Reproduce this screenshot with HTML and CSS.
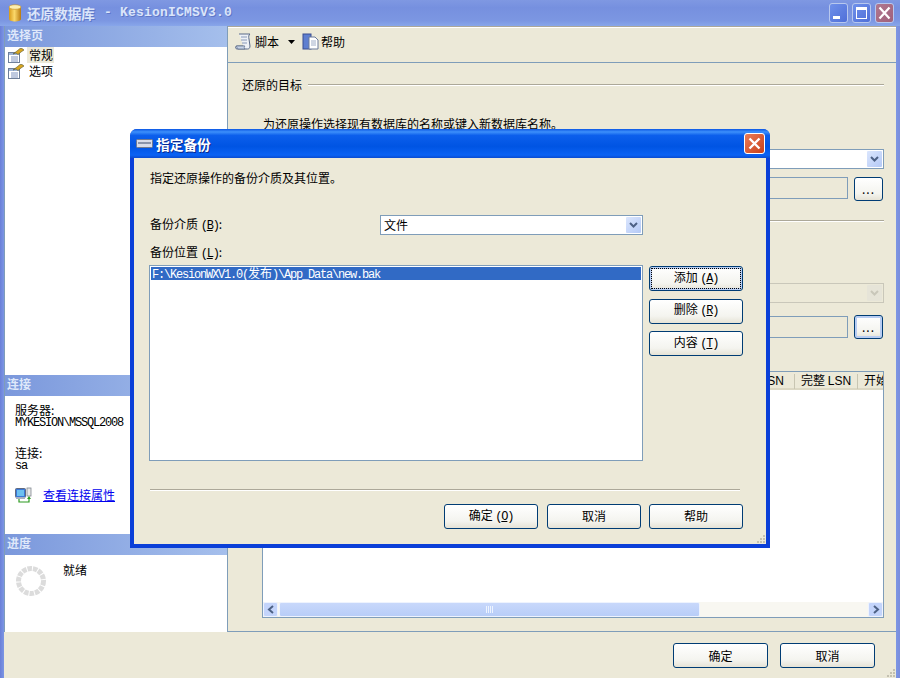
FILE: index.html
```html
<!DOCTYPE html>
<html lang="zh-CN">
<head>
<meta charset="utf-8">
<title>还原数据库</title>
<link rel="stylesheet" href="styles.css">
</head>
<body>
<div class="window">
  <header class="titlebar">
    <svg class="app-icon" width="14" height="18" viewBox="0 0 14 18"><defs><linearGradient id="db" x1="0" x2="1" y1="0" y2="0"><stop offset="0" stop-color="#d89a18"/><stop offset=".45" stop-color="#fbd86a"/><stop offset="1" stop-color="#b87a10"/></linearGradient></defs><path d="M1 3v12c0 1.500 2.700 2.500 6 2.500s6-1 6-2.500V3z" fill="url(#db)"/><ellipse cx="7" cy="3" rx="6" ry="2.300" fill="#fdeeb0" stroke="#c08a20" stroke-width=".6"/></svg>
    <span class="title-cjk">还原数据库</span>
    <span class="title-latin">- KesionICMSV3.0</span>
    <div class="controls">
      <span class="ctl"><svg width="19" height="20" viewBox="0 0 19 20"><rect x="4" y="13" width="7" height="3" fill="#fff"/></svg></span>
      <span class="ctl"><svg width="19" height="20" viewBox="0 0 19 20"><path d="M4 4h11v12H4zM5 7v8h9V7z" fill="#fff" fill-rule="evenodd"/></svg></span>
      <span class="ctl ctl-close"><svg width="19" height="20" viewBox="0 0 19 20"><path d="M4.500 4.500l10 11M14.500 4.500l-10 11" stroke="#fff" stroke-width="2.200" fill="none"/></svg></span>
    </div>
  </header>

  <div class="panes">
    <aside class="sidebar">
      <section class="side-sec side-pages">
        <h2 class="side-head">选择页</h2>
        <ul class="pages">
          <li class="page-item">
            <svg class="page-icon" width="16" height="15" viewBox="0 0 16 15"><rect x=".5" y="4.500" width="11" height="10" fill="#fff" stroke="#6f7f9a"/><path d="M1 5h10v2H1z" fill="#9db4d8"/><path d="M3 9h7M3 11h7M3 13h7" stroke="#7f93c0"/><path d="M5 6l4-3 3-2.500h2l2 1.500-3 2-3 2.500-2-1.500z" fill="#d8a520" stroke="#5a5a30" stroke-width=".6"/></svg>
            <span class="page-label page-current">常规</span>
          </li>
          <li class="page-item">
            <svg class="page-icon" width="16" height="15" viewBox="0 0 16 15"><rect x=".5" y="4.500" width="11" height="10" fill="#fff" stroke="#6f7f9a"/><path d="M1 5h10v2H1z" fill="#9db4d8"/><path d="M3 9h7M3 11h7M3 13h7" stroke="#7f93c0"/><path d="M5 6l4-3 3-2.500h2l2 1.500-3 2-3 2.500-2-1.500z" fill="#d8a520" stroke="#5a5a30" stroke-width=".6"/></svg>
            <span class="page-label">选项</span>
          </li>
        </ul>
      </section>
      <section class="side-sec side-conn">
        <h2 class="side-head">连接</h2>
        <div class="conn-body">
          <div class="conn-label">服务器:</div>
          <div class="mono conn-value">MYKESION\MSSQL2008</div>
          <div class="conn-label conn-gap">连接:</div>
          <div class="mono conn-value">sa</div>
          <div class="conn-link-row">
            <svg width="17" height="16" viewBox="0 0 17 16"><rect x=".5" y="1.500" width="10" height="9" rx="1" fill="#3a78d8" stroke="#606a80"/><rect x="2" y="3" width="7" height="6" fill="#6cc0f0"/><rect x="1" y="10" width="9" height="2" fill="#a8b0c0"/><rect x="12" y="1" width="4" height="8" fill="#e8e8e8" stroke="#808890" stroke-width=".8"/><path d="M4 12v3h10v-4" stroke="#2c9a20" stroke-width="1.200" fill="none"/><path d="M12 12h4l-2-3z" fill="#2c9a20"/></svg>
            <a class="conn-link" href="#">查看连接属性</a>
          </div>
        </div>
      </section>
      <section class="side-sec side-prog">
        <h2 class="side-head">进度</h2>
        <div class="prog-body">
          <svg width="32" height="32" viewBox="0 0 32 32"><circle cx="16" cy="16" r="12.500" fill="none" stroke="#dcdcdc" stroke-width="5" stroke-dasharray="4.500 1"/></svg>
          <span class="prog-text">就绪</span>
        </div>
      </section>
    </aside>

    <main class="content">
      <div class="toolbar">
        <svg width="18" height="18" viewBox="0 0 18 18"><path d="M4 1h11c-1.500 1-1.500 3-1 5l1 7c0 2-1 3-2.500 3H2c-1.500 0-2-2-.5-3h7" fill="#eef1f6" stroke="#5a6a88"/><path d="M6 4h6M6 7h6M7 10h5" stroke="#8a9ab8"/><path d="M1 13h9c-1 1-1 2 0 3H3z" fill="#c8d4e8" stroke="#5a6a88" stroke-width=".7"/></svg>
        <span class="tb-label">脚本</span>
        <svg class="tb-caret" width="7" height="4" viewBox="0 0 7 4"><path d="M0 0h7L3.500 4z" fill="#000"/></svg>
        <svg class="tb-help" width="17" height="17" viewBox="0 0 17 17"><rect x="1" y="1" width="8" height="15" fill="#5f7fd0" stroke="#3a4f90"/><path d="M7 4h6l3 3v9H7z" fill="#fff" stroke="#6a7a9a"/><path d="M9 8h5M9 10h5M9 12h5" stroke="#a0aec8"/></svg>
        <span class="tb-label">帮助</span>
      </div>

      <div class="form">
        <div class="group-head"><span>还原的目标</span><i class="rule"></i></div>
        <p class="hint">为还原操作选择现有数据库的名称或键入新数据库名称。</p>
        <div class="combo combo-target">
          <span class="combo-btn"><svg width="9" height="7" viewBox="0 0 9 7"><path d="M1 1l3.500 3.500L8 1" stroke="#4d6185" stroke-width="2" fill="none"/></svg></span>
        </div>
        <div class="field-row field-row-a">
          <div class="field"></div>
          <button class="btn btn-dots" type="button">...</button>
        </div>
        <i class="rule rule-b"></i>
        <div class="combo combo-disabled">
          <span class="combo-btn combo-btn-off"><svg width="9" height="7" viewBox="0 0 9 7"><path d="M1 1l3.500 3.500L8 1" stroke="#c9c7ba" stroke-width="2" fill="none"/></svg></span>
        </div>
        <div class="field-row field-row-b">
          <div class="field"></div>
          <button class="btn btn-dots btn-default" type="button">...</button>
        </div>
        <div class="grid">
          <div class="grid-head">
            <span class="col col-fill"><span class="latin-sans">SN</span></span>
            <span class="col col-full">完整 <span class="latin-sans">LSN</span></span>
            <span class="col col-start">开始</span>
          </div>
          <div class="grid-body"></div>
          <div class="hscroll">
            <span class="sb-btn"><svg width="8" height="9" viewBox="0 0 8 9"><path d="M6 1L2 4.500 6 8" stroke="#4d6185" stroke-width="2" fill="none"/></svg></span>
            <span class="sb-thumb"><svg width="8" height="7" viewBox="0 0 8 7"><path d="M.5 0v7M2.500 0v7M4.500 0v7M6.500 0v7" stroke="#eef4ff"/></svg></span>
            <span class="sb-track"></span>
            <span class="sb-btn"><svg width="8" height="9" viewBox="0 0 8 9"><path d="M2 1l4 3.500L2 8" stroke="#4d6185" stroke-width="2" fill="none"/></svg></span>
          </div>
        </div>
      </div>
    </main>
  </div>

  <footer class="footer">
    <button class="btn btn-main" type="button">确定</button>
    <button class="btn btn-main" type="button">取消</button>
    <svg class="grip" width="10" height="10" viewBox="0 0 10 10"><path d="M7 1h2v2H7zM4 4h2v2H4zM7 4h2v2H7zM1 7h2v2H1zM4 7h2v2H4zM7 7h2v2H7z" fill="#c4c1b0"/></svg>
  </footer>

  <div class="dialog">
    <div class="dlg-title">
      <svg width="17" height="9" viewBox="0 0 17 9"><rect x=".5" y=".5" width="16" height="8" rx="1" fill="#d8dce8" stroke="#707a90"/><rect x="2" y="3" width="13" height="2" fill="#8a94aa"/></svg>
      <span class="dlg-title-text">指定备份</span>
      <span class="dlg-close"><svg width="21" height="21" viewBox="0 0 21 21"><path d="M5.500 5.500l10 10M15.500 5.500l-10 10" stroke="#fff" stroke-width="2.400" fill="none"/></svg></span>
    </div>
    <div class="dlg-body">
      <p class="dlg-intro">指定还原操作的备份介质及其位置。</p>
      <div class="dlg-media">
        <span class="dlg-media-label">备份介质 <span class="mono">(<u>B</u>)</span>:</span>
        <div class="combo combo-media">
          <span class="combo-text">文件</span>
          <span class="combo-btn"><svg width="9" height="7" viewBox="0 0 9 7"><path d="M1 1l3.500 3.500L8 1" stroke="#4d6185" stroke-width="2" fill="none"/></svg></span>
        </div>
      </div>
      <div class="dlg-loc-label">备份位置 <span class="mono">(<u>L</u>)</span>:</div>
      <div class="dlg-loc">
        <div class="listbox">
          <div class="list-row list-row-sel"><span class="mono">F:\KesionWXV1.0(</span>发布<span class="mono">)\App_Data\new.bak</span></div>
        </div>
        <div class="dlg-side">
          <button class="btn btn-dlg btn-focus" type="button">添加 <span class="mono">(<u>A</u>)</span></button>
          <button class="btn btn-dlg" type="button">删除 <span class="mono">(<u>R</u>)</span></button>
          <button class="btn btn-dlg" type="button">内容 <span class="mono">(<u>T</u>)</span></button>
        </div>
      </div>
      <i class="rule dlg-rule"></i>
      <div class="dlg-actions">
        <button class="btn btn-dlg" type="button">确定 <span class="mono">(<u>O</u>)</span></button>
        <button class="btn btn-dlg" type="button">取消</button>
        <button class="btn btn-dlg" type="button">帮助</button>
      </div>
      <svg class="grip grip-dlg" width="10" height="10" viewBox="0 0 10 10"><path d="M7 1h2v2H7zM4 4h2v2H4zM7 4h2v2H7zM1 7h2v2H1zM4 7h2v2H4zM7 7h2v2H7z" fill="#c4c1b0"/></svg>
    </div>
  </div>
</div>
</body>
</html>
```

FILE: styles.css
```css
* { box-sizing: border-box; }
html, body { margin: 0; padding: 0; }
body {
  width: 900px;
  height: 678px;
  overflow: hidden;
  font: 12px/14px "Noto Sans CJK SC", "Liberation Sans", sans-serif;
  color: #000;
  background: #ece9d8;
}
.mono {
  font-family: "Liberation Mono", "Noto Sans CJK SC", monospace;
  font-size: 12px;
  letter-spacing: -1.200px;
}
.latin-sans { font-family: "Liberation Sans", sans-serif; }

.window {
  position: relative;
  width: 900px;
  height: 678px;
  display: flex;
  flex-direction: column;
  padding: 0 4px;
  background: linear-gradient(90deg, #6a7fd8 0, #7c96e4 4px, #7c96e4 896px, #7a8ddc 900px);
  overflow: hidden;
}

/* main title bar */
.titlebar {
  flex: none;
  height: 26px;
  margin: 0 -4px;
  padding: 0 6px 0 8px;
  display: flex;
  align-items: center;
  background: linear-gradient(180deg, #7f98e2 0, #7690df 30%, #7c97e2 80%, #88a6ea 100%);
}
.app-icon { margin-right: 5px; }
.title-cjk, .title-latin {
  color: #dbe5fa;
  font-weight: 700;
  text-shadow: 1px 1px 0 #5f78c8;
}
.title-cjk { font-size: 13.600px; }
.title-latin {
  margin-left: 9px;
  font-family: "Liberation Mono", monospace;
  font-size: 13px;
  letter-spacing: .2px;
}
.controls { margin-left: auto; display: flex; gap: 4px; }
.ctl {
  display: block;
  width: 19px;
  height: 20px;
  border: 1px solid #b8c8ee;
  border-radius: 3px;
  background: linear-gradient(135deg, #6f90ea, #4f6fd8);
}
.ctl svg { display: block; margin: -1px; }
.ctl-close { background: linear-gradient(135deg, #b07890, #a0607a); }

.panes { flex: 1; min-height: 0; display: flex; }

/* left column */
.sidebar {
  flex: none;
  width: 224px;
  display: flex;
  flex-direction: column;
  background: #fff;
  border-left: 1px solid #7f9db9;
  border-right: 1px solid #7f9db9;
}
.side-sec { display: flex; flex-direction: column; }
.side-pages { flex: 1; }
.side-conn { height: 159px; }
.side-prog { height: 98px; }
.side-head {
  flex: none;
  height: 21px;
  margin: 0;
  padding: 1px 0 0 2px;
  font-size: 12px;
  line-height: 16px;
  font-weight: 700;
  color: #dfe8fa;
  background: linear-gradient(90deg, #7b98dc, #a5bfec);
}
.pages { list-style: none; margin: 0; padding: 0 0 0 3px; }
.page-item { height: 16px; display: flex; align-items: center; }
.page-icon { flex: none; }
.page-label { margin-left: 3px; padding: 1px 1px 1px 2px; line-height: 14px; }
.page-current { background: #ece9d8; }

.conn-body { padding: 8px 0 0 10px; line-height: 12px; }
.conn-label { height: 13px; }
.conn-value { height: 13px; line-height: 13px; }
.conn-gap { margin-top: 17px; }
.conn-link-row { margin-top: 14px; display: flex; align-items: center; gap: 11px; }
.conn-link { color: #00e; text-decoration: underline; }
.prog-body { display: flex; padding: 8px 0 0 10px; }
.prog-text { margin-left: 16px; }
.prog-body svg { margin-top: 2px; margin-left: 0; }

/* right column */
.content {
  flex: 1;
  min-width: 0;
  display: flex;
  flex-direction: column;
  background: #ece9d8;
  border-bottom: 1px solid #7f9db9;
}
.toolbar {
  flex: none;
  height: 37px;
  padding: 0 0 6px 7px;
  display: flex;
  align-items: center;
  border-top: 1px solid #aca899;
  box-shadow: inset 0 1px 0 #fff;
  border-bottom: 1px solid #7f9db9;
}
.tb-label { margin-left: 2px; }
.tb-caret { margin-left: 9px; }
.tb-help { margin-left: 7px; }
.form { flex: 1; min-height: 0; padding: 15px 12px 13px 14px; display: flex; flex-direction: column; }
.group-head { display: flex; align-items: center; gap: 6px; height: 14px; }
.rule {
  display: block;
  flex: 1;
  height: 2px;
  border-top: 1px solid #aca899;
  border-bottom: 1px solid #fff;
}
.hint { margin: 25px 0 0 21px; }
.combo {
  position: relative;
  height: 20px;
  border: 1px solid #7f9db9;
  background: #fff;
}
.combo-btn {
  position: absolute;
  top: 1px;
  right: 1px;
  width: 15px;
  height: 16px;
  display: flex;
  align-items: center;
  justify-content: center;
  border-radius: 1px;
  background: linear-gradient(135deg, #dbe6fd, #b4c9f6);
}
.combo-target { flex: none; margin: 18px 0 0 20px; }
.field-row { flex: none; display: flex; gap: 6px; margin: 0 1px 0 20px; align-items: flex-start; }
.field-row-a { margin-top: 8px; }
.field { flex: 1; height: 22px; border: 1px solid #7f9db9; }
.field-row-b .field { margin-top: 1px; }
.btn {
  font: inherit;
  color: #000;
  padding: 0;
  border: 1px solid #003c74;
  border-radius: 3px;
  background: linear-gradient(180deg, #fff 0, #f4f4ef 70%, #e6e3d6 100%);
}
.btn-dots { width: 29px; height: 24px; line-height: 18px; flex: none; letter-spacing: 1px; }
.btn-default { box-shadow: inset 0 0 0 2px #b8cdf2; }
.rule-b { flex: none; margin-top: 19px; margin-left: 20px; }
.combo-disabled {
  flex: none;
  margin: 61px 0 0 20px;
  border-color: #c9c7ba;
  background: #ece9d8;
}
.combo-btn-off { background: #e6e4d8; }
.field-row-b { margin-top: 12px; }
.grid {
  flex: 1;
  min-height: 0;
  margin: 32px 0 0 20px;
  display: flex;
  flex-direction: column;
  border: 1px solid #7f9db9;
  background: #fff;
}
.grid-head {
  flex: none;
  height: 18px;
  display: flex;
  align-items: center;
  background: #ece9d8;
  box-shadow: inset 0 -2px 0 #dcd8c4;
  overflow: hidden;
}
.col { flex: none; padding: 0 0 2px 6px; white-space: nowrap; }
.col-fill { flex: 1; text-align: right; padding-right: 10px; border-right: 1px solid #c8c5b2; line-height: 12px; }
.col-full { width: 63px; border-right: 1px solid #c8c5b2; line-height: 12px; }
.col-start { width: 25px; line-height: 12px; overflow: hidden; }
.grid-body { flex: 1; }
.hscroll {
  flex: none;
  height: 15px;
  display: flex;
  background: #f8f7f1;
}
.sb-btn {
  flex: none;
  width: 15px;
  display: flex;
  align-items: center;
  justify-content: center;
  border: 1px solid #eef3fe;
  border-radius: 2px;
  background: #c3d4fb;
}
.sb-thumb {
  flex: none;
  margin-left: 1px;
  width: 421px;
  display: flex;
  align-items: center;
  justify-content: center;
  border: 1px solid #eef3fe;
  border-radius: 2px;
  background: linear-gradient(180deg, #c8d8fb, #b8cdf8);
}
.sb-track { flex: 1; }

/* bottom bar of the main window */
.footer {
  flex: none;
  position: relative;
  height: 46px;
  margin: 0;
  padding: 11px 21px 0 0;
  display: flex;
  justify-content: flex-end;
  gap: 12px;
  background: #ece9d8;
}
.btn-main { width: 95px; height: 25px; }
.grip { position: absolute; right: 0; bottom: 0; }

/* modal dialog */
.dialog {
  position: absolute;
  left: 130px;
  top: 129px;
  width: 640px;
  height: 419px;
  display: flex;
  flex-direction: column;
  border-radius: 7px 7px 0 0;
  overflow: hidden;
  background: #0a3fd8;
}
.dlg-title {
  flex: none;
  height: 29px;
  padding: 0 5px 0 6px;
  display: flex;
  align-items: center;
  background: linear-gradient(180deg, #0a56e4 0, #3d90fb 10%, #0c5fec 22%, #0054e3 60%, #0a62f4 90%, #0a4bd0 100%);
}
.dlg-title-text {
  margin-left: 3px;
  color: #fff;
  font-size: 13.700px;
  font-weight: 700;
  text-shadow: 1px 1px 0 #0a2a90;
}
.dlg-close {
  margin-left: auto;
  width: 21px;
  height: 21px;
  border: 1px solid #fff;
  border-radius: 3px;
  background: linear-gradient(135deg, #ea7c58, #c8401a);
}
.dlg-close svg { display: block; margin: -1px; }
.dlg-body {
  flex: 1;
  position: relative;
  margin: 0 4px 4px;
  padding: 13px 23px 0 16px;
  background: #ece9d8;
  display: flex;
  flex-direction: column;
}
.dlg-intro { margin: 0; }
.dlg-media { margin-top: 30px; display: flex; align-items: center; }
.dlg-media-label { width: 230px; flex: none; }
.combo-media { width: 263px; }
.combo-text { display: block; padding-left: 3px; line-height: 17px; }
.dlg-loc-label { margin-top: 10px; height: 14px; }
.dlg-loc { margin: 6px 0 0 -1px; display: flex; gap: 6px; }
.listbox {
  width: 494px;
  height: 196px;
  padding: 1px;
  border: 1px solid #7f9db9;
  background: #fff;
}
.list-row { height: 13px; padding-left: 1px; line-height: 12px; white-space: nowrap; }
.list-row-sel { background: #316ac5; color: #fff; }
.dlg-side { display: flex; flex-direction: column; gap: 7.500px; padding-top: 1px; }
.btn-dlg { width: 94px; height: 25px; line-height: 14px; padding-bottom: 2px; }
.btn-focus { outline: 1px dotted #000; outline-offset: -3px; box-shadow: inset 0 0 0 2px #b8cdf2; }
.dlg-rule { flex: none; margin-top: 28px; width: 590px; }
.dlg-actions { margin-top: 13px; display: flex; justify-content: flex-end; gap: 9px; }
.dlg-actions .btn-dlg + .btn-dlg + .btn-dlg { margin-left: -1px; }
```
